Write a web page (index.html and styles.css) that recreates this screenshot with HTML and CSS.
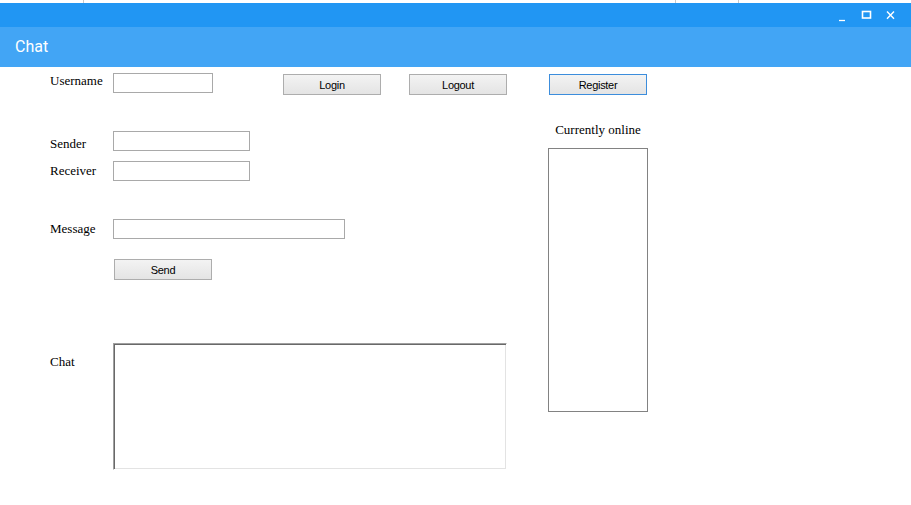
FILE: index.html
```html
<!DOCTYPE html>
<html>
<head>
<meta charset="utf-8">
<title>Chat</title>
<link rel="stylesheet" href="styles.css">
</head>
<body>
<div class="strip">
  <span class="seg seg1"></span>
  <span class="seg seg2"></span>
  <span class="seg seg3"></span>
</div>
<div class="titlebar">
  <svg class="ctl" width="12" height="12" viewBox="0 0 12 12"><path d="M2 10.5H8" stroke="#fff" stroke-width="1.3" fill="none"/></svg>
  <svg class="ctl" width="12" height="12" viewBox="0 0 12 12"><rect x="1.5" y="1.5" width="8" height="6.5" stroke="#fff" stroke-width="1.6" fill="none"/></svg>
  <svg class="ctl" width="12" height="12" viewBox="0 0 12 12"><path d="M2 1.5L9 8.8M9 1.5L2 8.8" stroke="#fff" stroke-width="1.4" fill="none"/></svg>
</div>
<div class="header"><span class="title">Chat</span></div>
<div class="main">
  <div class="left">
    <div class="row row-user">
      <label class="lbl lbl-user">Username</label>
      <input class="field f-user" type="text">
      <button class="btn btn-login">Login</button>
      <button class="btn btn-logout">Logout</button>
    </div>
    <div class="row row-sender">
      <label class="lbl lbl-sender">Sender</label>
      <input class="field f-short" type="text">
    </div>
    <div class="row row-receiver">
      <label class="lbl lbl-receiver">Receiver</label>
      <input class="field f-short" type="text">
    </div>
    <div class="row row-message">
      <label class="lbl lbl-message">Message</label>
      <input class="field f-long" type="text">
    </div>
    <div class="row row-send">
      <button class="btn btn-send">Send</button>
    </div>
    <div class="row row-chat">
      <label class="lbl lbl-chat">Chat</label>
      <div class="chatbox"></div>
    </div>
  </div>
  <div class="right">
    <button class="btn btn-register">Register</button>
    <div class="online-title">Currently online</div>
    <div class="listbox"></div>
  </div>
</div>
</body>
</html>
```
FILE: styles.css
```css
* { box-sizing: border-box; }
html, body { margin: 0; padding: 0; background: #fff; }
body { width: 911px; height: 505px; overflow: hidden; font-family: "Liberation Serif", "Times New Roman", serif; }

.strip { height: 3px; display: flex; background: #fff; }
.seg { display: block; height: 3px; border-right: 1px solid #c9c9c9; }
.seg1 { width: 84px; }
.seg2 { width: 592px; }
.seg3 { width: 63px; }

.titlebar {
  height: 24px;
  background: #2196F3;
  display: flex;
  justify-content: flex-end;
  align-items: flex-start;
  padding: 7px 14px 0 0;
  gap: 12px;
}
.ctl { display: block; }

.header {
  height: 40px;
  background: #42A5F5;
  display: flex;
  align-items: center;
  padding-left: 15px;
}
.title {
  font-family: Roboto, "Noto Sans", sans-serif;
  font-size: 16px;
  color: #fff;
  position: relative;
  top: -1px;
}

.main { display: flex; padding-left: 50px; }
.left { width: 498px; display: flex; flex-direction: column; }
.right { width: 100px; display: flex; flex-direction: column; }

.row { display: flex; align-items: flex-start; }
.lbl {
  width: 63px;
  font-size: 13px;
  line-height: 15px;
  color: #000;
  white-space: nowrap;
}

.field {
  height: 20px;
  border: 1px solid #a9a9a9;
  background: #fff;
  margin: 0;
  padding: 0 2px;
  font: 12px "Liberation Sans", Arial, sans-serif;
  outline: none;
}
.f-user { width: 100px; }
.f-short { width: 137px; }
.f-long { width: 232px; }

.btn {
  width: 98px;
  height: 21px;
  margin: 0;
  padding: 2px 0 0;
  border: 1px solid #adadad;
  background: linear-gradient(#f3f3f3, #e4e4e4);
  font-family: "Liberation Sans", Arial, sans-serif;
  font-size: 11px;
  letter-spacing: -0.3px;
  color: #000;
  line-height: 17px;
}

.row-user { margin-top: 6px; }
.lbl-user { margin-top: 0; }
.btn-login { margin-left: 70px; margin-top: 1px; }
.btn-logout { margin-left: 28px; margin-top: 1px; }

.row-sender { margin-top: 36px; }
.lbl-sender { margin-top: 5px; }

.row-receiver { margin-top: 10px; }
.lbl-receiver { margin-top: 2px; }

.row-message { margin-top: 38px; }
.lbl-message { margin-top: 2px; }

.row-send { margin-top: 20px; }
.btn-send { margin-left: 64px; }

.row-chat { margin-top: 63px; }
.lbl-chat { margin-top: 11px; }
.chatbox {
  width: 394px;
  height: 127px;
  background: #fff;
  border-top: 1px solid #a0a0a0;
  border-left: 1px solid #a0a0a0;
  border-right: 1px solid #fff;
  border-bottom: 1px solid #fff;
  box-shadow: inset 1px 1px 0 #696969, inset -1px -1px 0 #e3e3e3;
}

.btn-register {
  margin-top: 7px;
  margin-left: 1px;
  border-color: #3c8ddc;
}
.online-title {
  margin-top: 27px;
  font-size: 13px;
  line-height: 15px;
  text-align: center;
  color: #000;
}
.listbox {
  margin-top: 11px;
  width: 100px;
  height: 264px;
  border: 1px solid #828282;
  background: #fff;
}
```
